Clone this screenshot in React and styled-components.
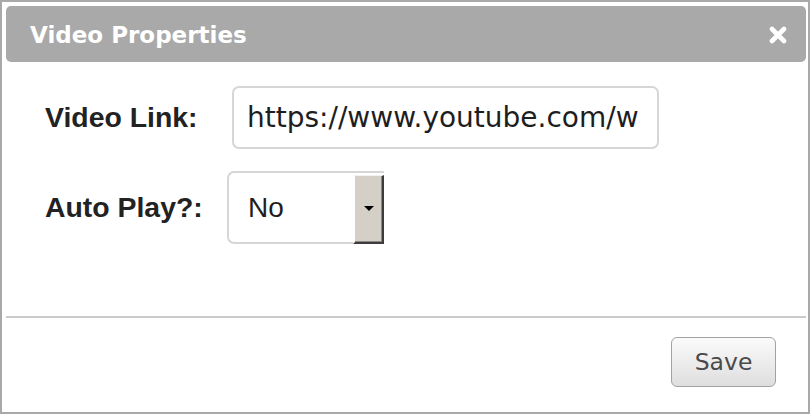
import React from "react";
import styled, { createGlobalStyle } from "styled-components";

const Global = createGlobalStyle`
  html, body { margin: 0; padding: 0; background: #ffffff; }
  * { box-sizing: border-box; }
`;

const Dialog = styled.div`
  width: 810px;
  height: 414px;
  border: 2px solid #a9a9a9;
  padding: 4px 2px 4px 4px;
  background: #ffffff;
  display: flex;
  flex-direction: column;
`;

const Header = styled.div`
  height: 56px;
  flex: none;
  background: #a9a9a9;
  border-radius: 5px;
  display: flex;
  align-items: center;
  justify-content: space-between;
  padding: 2px 19px 0 24px;
`;

const Title = styled.h1`
  margin: 0;
  font-family: "DejaVu Sans", Verdana, sans-serif;
  font-weight: bold;
  font-size: 23px;
  color: #ffffff;
`;

const CloseButton = styled.button`
  border: 0;
  padding: 0;
  background: transparent;
  width: 18px;
  height: 18px;
  display: flex;
  cursor: pointer;
`;

const Body = styled.div`
  flex: 1;
  padding: 24px 0 0 39px;
  display: grid;
  grid-template-columns: 182px auto;
  grid-auto-rows: min-content;
  row-gap: 22px;
  align-items: center;
  justify-content: start;
`;

const Label = styled.label`
  font-family: "Liberation Sans", Arial, sans-serif;
  font-weight: bold;
  font-size: 28.4px;
  color: #222222;
`;

const TextInput = styled.input`
  margin-left: 5px;
  width: 427px;
  height: 63px;
  border: 2px solid #d6d6d6;
  border-radius: 7px;
  padding: 0 17px 0 13px;
  font-family: "DejaVu Sans", Verdana, sans-serif;
  font-size: 28px;
  color: #1e1e1e;
  background: #fff;
  outline: none;
`;

const Select = styled.div`
  width: 157px;
  height: 73px;
  border: 2px solid #d6d6d6;
  border-right: 0;
  border-radius: 7px 0 0 7px;
  display: flex;
  align-items: stretch;
`;

const SelectValue = styled.span`
  flex: 1;
  display: flex;
  align-items: center;
  padding-left: 19px;
  font-family: "Liberation Sans", Arial, sans-serif;
  font-size: 28px;
  color: #1e1e1e;
`;

const SelectArrow = styled.span`
  width: 31px;
  margin-top: 2px;
  margin-bottom: -2px;
  background: #d4d0c8;
  border-top: 1px solid #f4f2ee;
  border-left: 2px solid #ffffff;
  border-right: 2px solid #3c3c3c;
  border-bottom: 2px solid #3c3c3c;
  box-shadow: inset -1px -1px 0 #8a8680;
  display: flex;
  align-items: center;
  justify-content: center;
`;

const Divider = styled.hr`
  margin: 0;
  border: 0;
  height: 2px;
  flex: none;
  background: #cacaca;
`;

const Footer = styled.div`
  flex: none;
  display: flex;
  justify-content: flex-end;
  padding: 19px 30px 21px 0;
`;

const SaveButton = styled.button`
  width: 105px;
  height: 50px;
  border: 1px solid #a2a2a2;
  border-radius: 6px;
  background: linear-gradient(#fbfbfb, #dedede);
  font-family: "DejaVu Sans", Verdana, sans-serif;
  font-size: 23.5px;
  color: #4a4a4a;
  padding: 0;
  cursor: pointer;
`;

export default function App() {
  return (
    <>
      <Global />
      <Dialog>
        <Header>
          <Title>Video Properties</Title>
          <CloseButton aria-label="close">
            <svg width="18" height="18" viewBox="0 0 18 18">
              <path d="M3 3 L15 15 M15 3 L3 15" stroke="#ffffff" strokeWidth="4.6" strokeLinecap="round" />
            </svg>
          </CloseButton>
        </Header>
        <Body>
          <Label>Video Link:</Label>
          <TextInput readOnly value="https://www.youtube.com/watch?v=" />
          <Label>Auto Play?:</Label>
          <Select>
            <SelectValue>No</SelectValue>
            <SelectArrow>
              <svg width="10" height="6" viewBox="0 0 10 6">
                <path d="M0 0 H10 L5 5 Z" fill="#000" />
              </svg>
            </SelectArrow>
          </Select>
        </Body>
        <Divider />
        <Footer>
          <SaveButton>Save</SaveButton>
        </Footer>
      </Dialog>
    </>
  );
}
